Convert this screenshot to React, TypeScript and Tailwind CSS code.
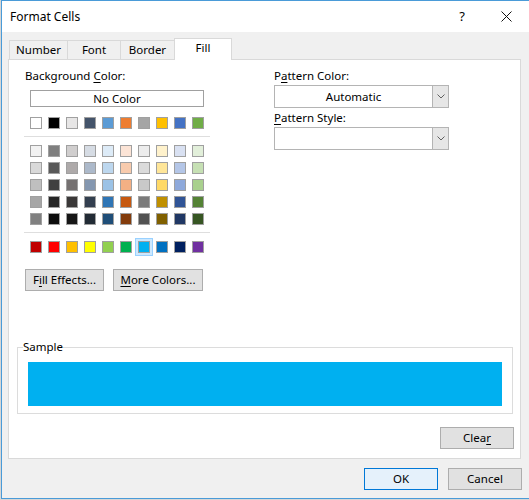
import React from 'react';

const themeTop = ['#FFFFFF', '#000000', '#E7E6E6', '#44546A', '#5B9BD5', '#ED7D31', '#A5A5A5', '#FFC000', '#4472C4', '#70AD47'];

const themeShades = [
    ['#F2F2F2', '#7F7F7F', '#D0CECE', '#D6DCE4', '#DDEBF7', '#FCE4D6', '#EDEDED', '#FFF2CC', '#D9E1F2', '#E2EFDA'],
    ['#D9D9D9', '#595959', '#AEAAAA', '#ACB9CA', '#BDD7EE', '#F8CBAD', '#DBDBDB', '#FFE699', '#B4C6E7', '#C6E0B4'],
    ['#BFBFBF', '#404040', '#757171', '#8497B0', '#9BC2E6', '#F4B084', '#C9C9C9', '#FFD966', '#8EA9DB', '#A9D08E'],
    ['#A6A6A6', '#262626', '#3A3838', '#333F4F', '#2F75B5', '#C65911', '#7B7B7B', '#BF8F00', '#305496', '#548235'],
    ['#808080', '#0D0D0D', '#161616', '#222B35', '#1F4E78', '#833C0C', '#525252', '#806000', '#203764', '#375623'],
];

const standard = ['#C00000', '#FF0000', '#FFC000', '#FFFF00', '#92D050', '#00B050', '#00B0F0', '#0070C0', '#002060', '#7030A0'];

const SELECTED = '#00B0F0';

function Swatch({ color, selected }: { color: string; selected?: boolean }) {
    return (
        <span
            className={
                'block w-[12px] h-[12px] border border-[#a0a0a0] ' +
                (selected ? 'shadow-[0_0_0_2px_#cce8ff,0_0_0_3px_#99d1ff]' : '')
            }
            style={{ backgroundColor: color }}
        />
    );
}

function SwatchRow({ colors, selected }: { colors: string[]; selected?: string }) {
    return (
        <div className="flex gap-[6px] ml-[5px]">
            {colors.map((c, i) => (
                <Swatch key={i} color={c} selected={selected === c} />
            ))}
        </div>
    );
}

function Chevron() {
    return (
        <svg width="8" height="5" viewBox="0 0 8 5" fill="none">
            <path d="M0.5 0.5 L4 4 L7.5 0.5" stroke="#606060" strokeWidth="1" />
        </svg>
    );
}

function Combo({ value }: { value?: string }) {
    return (
        <div className="flex h-[23px] w-[175px] border border-[#b4b4b4] bg-white">
            <div className="flex-1 flex items-center justify-center">{value}</div>
            <div className="w-[16px] border-l border-[#b4b4b4] bg-[#e6e6e6] flex items-center justify-center">
                <Chevron />
            </div>
        </div>
    );
}

function Btn({ children, className = '' }: { children: React.ReactNode; className?: string }) {
    return (
        <button className={'h-[22px] border border-[#adadad] bg-[#e1e1e1] flex items-center justify-center leading-none ' + className}>
            {children}
        </button>
    );
}

export default function App() {
    return (
        <div
            className="w-[529px] h-[500px] bg-[#d6d6d6] pl-[1px] text-[11.5px] text-black overflow-hidden"
            style={{ fontFamily: '"Noto Sans", "Open Sans", sans-serif' }}
        >
            <div className="w-[528px] h-[499px] border-l border-t border-b border-[#4a9bd8] bg-[#f0f0f0] flex flex-col">
                {/* Title bar */}
                <div className="h-[31px] bg-white flex items-center pl-[8px] pr-[17px]">
                    <span className="text-[12px]">Format Cells</span>
                    <span className="ml-auto text-[13px] mr-[36px]">?</span>
                    <svg width="11" height="11" viewBox="0 0 11 11">
                        <path d="M0.5 0.5 L10.5 10.5 M10.5 0.5 L0.5 10.5" stroke="#111" strokeWidth="1" />
                    </svg>
                </div>

                {/* Tabs */}
                <div className="mt-[6px] h-[21px] flex items-end pl-[7px]">
                    <div className="w-[59px] h-[19px] border-l border-t border-r border-[#d9d9d9] flex items-center justify-center">Number</div>
                    <div className="w-[53px] h-[19px] border-t border-r border-[#d9d9d9] flex items-center justify-center">Font</div>
                    <div className="w-[53px] h-[19px] border-t border-[#d9d9d9] flex items-center justify-center">Border</div>
                    <div className="relative z-10 -mb-px w-[58px] h-[22px] border-l border-t border-r border-[#d9d9d9] bg-white flex items-center justify-center pb-[3px]">Fill</div>
                </div>

                {/* Panel */}
                <div className="ml-[6px] w-[513px] h-[400px] border border-[#d9d9d9] bg-white flex flex-col">
                    <div className="flex pl-[16px] pt-[9px]">
                        {/* Left column */}
                        <div className="w-[249px] flex flex-col">
                            <div className="h-[14px] leading-[14px]">
                                Background <u className="underline-offset-2">C</u>olor:
                            </div>
                            <div className="mt-[7px] ml-[5px] w-[174px] h-[17px] border border-[#a0a0a0] flex items-center justify-center leading-none">
                                No Color
                            </div>
                            <div className="mt-[10px]">
                                <SwatchRow colors={themeTop} />
                            </div>
                            <div className="mt-[7px] -ml-px w-[186px] h-px bg-[#dedede]" />
                            <div className="mt-[8px] flex flex-col gap-[5px]">
                                {themeShades.map((row, i) => (
                                    <SwatchRow key={i} colors={row} />
                                ))}
                            </div>
                            <div className="mt-[7px] -ml-px w-[186px] h-px bg-[#dedede]" />
                            <div className="mt-[8px]">
                                <SwatchRow colors={standard} selected={SELECTED} />
                            </div>
                            <div className="mt-[16px] flex gap-[9px]">
                                <Btn className="w-[79px]">
                                    F<u className="underline-offset-2">i</u>ll Effects...
                                </Btn>
                                <Btn className="w-[90px]">
                                    <u className="underline-offset-2">M</u>ore Colors...
                                </Btn>
                            </div>
                        </div>

                        {/* Right column */}
                        <div className="flex flex-col">
                            <div className="h-[14px] leading-[14px]">
                                P<u className="underline-offset-2">a</u>ttern Color:
                            </div>
                            <div className="mt-[2px]">
                                <Combo value="Automatic" />
                            </div>
                            <div className="mt-[3px] h-[14px] leading-[14px]">
                                <u className="underline-offset-2">P</u>attern Style:
                            </div>
                            <div className="mt-[2px]">
                                <Combo />
                            </div>
                        </div>
                    </div>

                    {/* Sample */}
                    <fieldset className="mt-[49px] ml-[8px] w-[496px] border border-[#dcdcdc] pl-[10px] pr-[10px] pt-[8px] pb-[7px]">
                        <legend className="-ml-[5px] h-[14px] leading-[14px] px-0">Sample</legend>
                        <div className="h-[44px] bg-[#00B0F0]" />
                    </fieldset>

                    <div className="mt-[13px] flex justify-end pr-[6px]">
                        <Btn className="w-[74px]">
                            Clea<u className="underline-offset-2">r</u>
                        </Btn>
                    </div>
                </div>

                {/* Dialog buttons */}
                <div className="mt-[9px] flex justify-end gap-[10px] pr-[7px]">
                    <button className="w-[74px] h-[22px] border border-[#0078d7] bg-[#e5f1fb] flex items-center justify-center leading-none">
                        OK
                    </button>
                    <Btn className="w-[74px]">Cancel</Btn>
                </div>
            </div>
        </div>
    );
}
